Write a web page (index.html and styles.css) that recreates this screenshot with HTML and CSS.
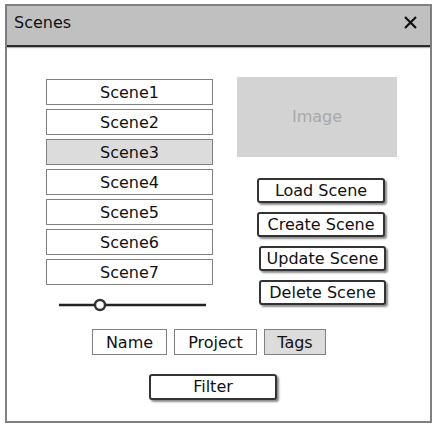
FILE: index.html
```html
<!DOCTYPE html>
<html lang="en">
<head>
    <meta charset="UTF-8">
    <meta name="viewport" content="width=device-width, initial-scale=1.0">
    <title>Scenes</title>
    <link rel="stylesheet" href="styles.css">
</head>
<body>
    <div class="window">
        <div class="title-bar">
            <span class="title">Scenes</span>
            <svg class="close" width="13" height="13" viewBox="0 0 13 13">
                <path d="M1 1 L12 12 M12 1 L1 12" stroke="#111" stroke-width="2.2" fill="none"/>
            </svg>
        </div>
        <div class="window-body">
            <div class="main">
                <div class="scene-col">
                    <div class="scene-list">
                        <div class="scene-item">Scene1</div>
                        <div class="scene-item">Scene2</div>
                        <div class="scene-item selected">Scene3</div>
                        <div class="scene-item">Scene4</div>
                        <div class="scene-item">Scene5</div>
                        <div class="scene-item">Scene6</div>
                        <div class="scene-item">Scene7</div>
                    </div>
                    <svg class="slider" width="150" height="14" viewBox="0 0 150 14">
                        <line x1="1" y1="7" x2="148" y2="7" stroke="#222" stroke-width="2.5"/>
                        <circle cx="42" cy="7" r="5" fill="#fff" stroke="#333" stroke-width="2.5"/>
                    </svg>
                </div>
                <div class="action-col">
                    <div class="preview">Image</div>
                    <button class="btn">Load Scene</button>
                    <button class="btn">Create Scene</button>
                    <button class="btn shifted">Update Scene</button>
                    <button class="btn shifted">Delete Scene</button>
                </div>
            </div>
            <div class="tabs">
                <div class="tab">Name</div>
                <div class="tab tab-project">Project</div>
                <div class="tab selected tab-tags">Tags</div>
            </div>
            <button class="btn filter">Filter</button>
        </div>
    </div>
</body>
</html>
```

FILE: styles.css
```css
body {
    margin: 0;
    font-family: "DejaVu Sans", sans-serif;
    color: #111;
    background: #fff;
}

.window {
    margin: 4px 0 0 5px;
    width: 427px;
    height: 419px;
    box-sizing: border-box;
    border: 2px solid #808080;
    background: #fff;
}

.title-bar {
    display: flex;
    justify-content: space-between;
    height: 41px;
    box-sizing: border-box;
    padding: 7px 0 0 7px;
    background-color: #c0c0c0;
    border-bottom: 2px solid #2a2a2a;
    box-shadow: 0 1px 1px rgba(0, 0, 0, 0.3);
}

.title {
    font-size: 16px;
    line-height: 19px;
}

.close {
    margin: 3px 13px 0 0;
}

.window-body {
    padding: 30px 0 0 39px;
}

.main {
    display: flex;
    gap: 24px;
}

.scene-col {
    width: 167px;
    padding-top: 2px;
}

.scene-list {
    display: flex;
    flex-direction: column;
    gap: 4px;
}

.scene-item {
    height: 26px;
    box-sizing: border-box;
    border: 1px solid #808080;
    font-size: 16px;
    line-height: 25px;
    text-align: center;
    background: #fff;
}

.scene-item.selected,
.tab.selected {
    background-color: #dcdcdc;
}

.slider {
    display: block;
    margin: 13px 0 0 12px;
}

.action-col {
    display: flex;
    flex-direction: column;
    align-items: flex-start;
    width: 160px;
}

.preview {
    width: 160px;
    height: 80px;
    background-color: #d3d3d3;
    color: #a9a9a9;
    font-size: 16px;
    line-height: 80px;
    text-align: center;
    margin-bottom: 12px;
}

.btn {
    display: block;
    width: 128px;
    height: 25px;
    margin: 9px 0 0 20px;
    padding: 0;
    box-sizing: border-box;
    border: 2px solid #333;
    border-radius: 3px;
    background: #fff;
    box-shadow: 2px 2px 2px rgba(0, 0, 0, 0.45);
    font-family: "DejaVu Sans", sans-serif;
    font-size: 16px;
    line-height: 21px;
    color: #111;
}

.btn.shifted {
    margin-left: 22px;
    width: 127px;
}

.tabs {
    display: flex;
    gap: 7px;
    margin: 17px 0 0 46px;
}

.tab {
    width: 75px;
    height: 26px;
    box-sizing: border-box;
    border: 1px solid #808080;
    font-size: 16px;
    line-height: 25px;
    text-align: center;
}

.tab-project {
    width: 83px;
}

.tab-tags {
    width: 62px;
}

.filter {
    height: 26px;
    margin: 19px 0 0 103px;
    line-height: 22px;
}
```
